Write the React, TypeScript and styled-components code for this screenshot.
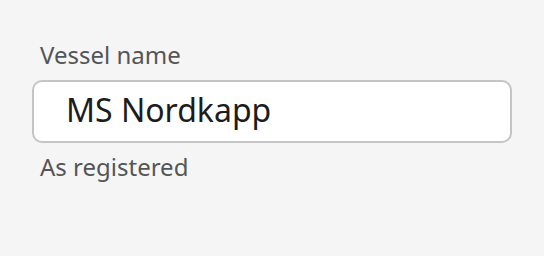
import React from "react";
import styled, { createGlobalStyle } from "styled-components";

const GlobalStyle = createGlobalStyle`
  html, body {
    margin: 0;
    padding: 0;
    background: #f5f5f5;
  }
  body {
    font-family: "Noto Sans", "Open Sans", sans-serif;
  }
`;

const Field: React.FC<{ label: string; value: string; hint: string }> = ({ label, value, hint }) => {
    return (
        <FieldContainer>
            <label className={"label"} htmlFor={"vessel"}>{label}</label>
            <input className={"input"} id={"vessel"} defaultValue={value} />
            <div className={"hint"}>{hint}</div>
        </FieldContainer>
    )
}

const App: React.FC = () => {
    return (
        <Page>
            <GlobalStyle />
            <Field label={"Vessel name"} value={"MS Nordkapp"} hint={"As registered"} />
        </Page>
    )
}

export default App;


const Page = styled.div`
  padding: 39px 32px 0;
`;

const FieldContainer = styled.div`
  width: 480px;
  display: flex;
  flex-direction: column;

  .label {
    margin-left: 8px;
    font-size: 24px;
    line-height: 32px;
    color: #555555;
  }

  .input {
    box-sizing: border-box;
    margin-top: 9px;
    width: 480px;
    height: 63px;
    padding: 0 0 4px 32px;
    border: 2px solid #c4c4c4;
    border-radius: 10px;
    background: #ffffff;
    font-family: "Noto Sans", "Open Sans", sans-serif;
    font-size: 32px;
    color: #1c1c1c;
    outline: none;
  }

  .hint {
    margin: 8px 0 0 8px;
    font-size: 24px;
    line-height: 32px;
    color: #555555;
  }
`;
